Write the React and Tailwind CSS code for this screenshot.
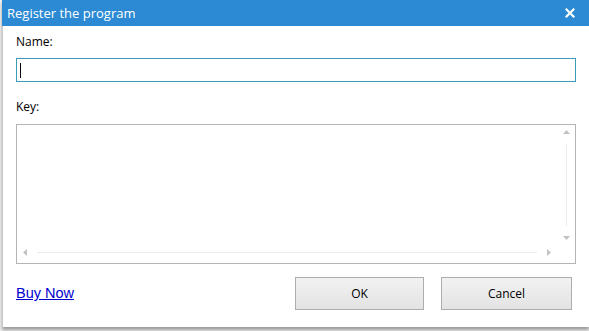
export default function App() {
  return (
    <div className="w-[589px] h-[331px] bg-[#f0f0f0] overflow-hidden relative" style={{ fontFamily: '"Open Sans", "Noto Sans", sans-serif' }}>
      <div className="ml-[2px] w-[587px] h-[327px] bg-white border-l border-[#c8c8c8] flex flex-col shadow-[0_3px_3px_rgba(0,0,0,0.35)]">
        {/* Title bar */}
        <div className="h-[26px] bg-[#2b8ad3] flex items-center justify-between pl-[5px] pr-[14px] -ml-px">
          <span className="text-white text-[13px] leading-none">Register the program</span>
          <svg width="10" height="10" viewBox="0 0 10 10">
            <path d="M1.5 1.5 L8.5 8.5 M8.5 1.5 L1.5 8.5" stroke="white" strokeWidth="2.2" strokeLinecap="square" />
          </svg>
        </div>

        <div className="flex flex-col pl-[13px] pr-[13px]">
          <div className="text-[12px] text-black mt-[8px] leading-[16px]">Name:</div>
          <div className="mt-[8px] h-[24px] border border-[#3a9cb7] flex items-center pl-[3px]">
            <div className="w-px h-[15px] bg-black" />
          </div>

          <div className="text-[12px] text-black mt-[17px] leading-[16px]">Key:</div>
          <div className="mt-[9px] h-[140px] border border-[#b4b4b4] flex flex-col">
            <div className="flex-1 flex">
              <div className="flex-1" />
              <div className="w-[17px] flex flex-col items-center pt-[5px] pb-[4px]">
                <svg width="7" height="4" viewBox="0 0 7 4"><path d="M0 4 L3.5 0 L7 4 Z" fill="#c2c2c2" /></svg>
                <div className="flex-1 w-px bg-[#ececec] my-[10px]" />
                <svg width="7" height="4" viewBox="0 0 7 4"><path d="M0 0 L3.5 4 L7 0 Z" fill="#c2c2c2" /></svg>
              </div>
            </div>
            <div className="h-[17px] flex items-center pl-[6px] pr-[24px] mb-[2px]">
              <svg width="4" height="7" viewBox="0 0 4 7"><path d="M4 0 L0 3.5 L4 7 Z" fill="#c2c2c2" /></svg>
              <div className="flex-1 h-px bg-[#ececec] mx-[10px]" />
              <svg width="4" height="7" viewBox="0 0 4 7"><path d="M0 0 L4 3.5 L0 7 Z" fill="#c2c2c2" /></svg>
            </div>
          </div>

          <div className="flex items-center mt-[13px]">
            <a href="#" className="text-[#0000d0] underline text-[14.5px] mt-[1px]" style={{ fontFamily: '"Liberation Sans", Arial, sans-serif' }}>Buy Now</a>
            <div className="flex-1" />
            <button className="w-[129px] h-[33px] border border-[#adadad] bg-gradient-to-b from-[#f2f2f2] to-[#e3e3e3] text-[12px] text-black">OK</button>
            <button className="ml-[17px] mr-[4px] w-[131px] h-[33px] border border-[#adadad] bg-gradient-to-b from-[#f2f2f2] to-[#e3e3e3] text-[12px] text-black">Cancel</button>
          </div>
        </div>
      </div>
    </div>
  );
}
